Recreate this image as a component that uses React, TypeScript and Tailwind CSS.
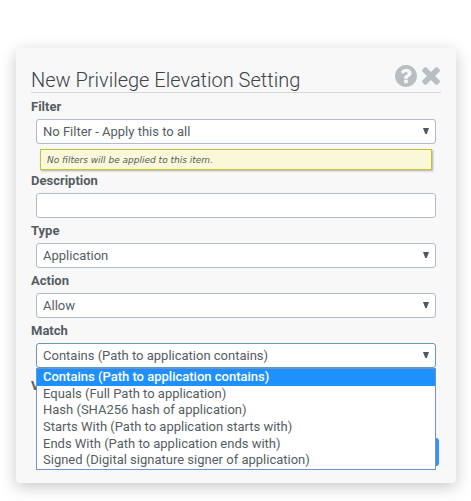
import React, { useState } from 'react';

interface SelectFieldProps {
  id: string;
  label: string;
  options: string[];
  open?: boolean;
  children?: React.ReactNode;
}

const matchOptions = [
  'Contains (Path to application contains)',
  'Equals (Full Path to application)',
  'Hash (SHA256 hash of application)',
  'Starts With (Path to application starts with)',
  'Ends With (Path to application ends with)',
  'Signed (Digital signature signer of application)',
];

const FieldLabel: React.FC<{ id: string; children: React.ReactNode }> = ({ id, children }) => (
  <label htmlFor={id} className="mb-[2px] block pt-px text-[13px] leading-5 font-bold text-[#555d63]">
    {children}
  </label>
);

const SelectField: React.FC<SelectFieldProps> = ({ id, label, options, open = false, children }) => {
  const [value, setValue] = useState(options[0]);

  return (
    <div>
      <FieldLabel id={id}>{label}</FieldLabel>
      <div className="relative mx-[5px]">
        <select
          id={id}
          value={value}
          onChange={(e) => setValue(e.target.value)}
          className={`block h-[25px] w-full appearance-none rounded-[3px] border bg-white px-[6px] text-[13px] leading-5 outline-none ${
            open ? 'border-[#6797bd]' : 'border-[#aebccd]'
          }`}
        >
          {options.map((option) => (
            <option key={option}>{option}</option>
          ))}
        </select>
        {/* Drop-down arrow */}
        <svg
          viewBox="0 0 6 6"
          className="pointer-events-none absolute top-[9px] right-[7px] size-[6px] fill-[#4b5962]"
          aria-hidden="true"
        >
          <path d="M0 0h6L3.7 6H2.3z" />
        </svg>

        {open && (
          <ul
            role="listbox"
            aria-label={label}
            className="absolute inset-x-0 top-full z-10 grid h-[102px] grid-rows-6 border border-[#6f93cf] bg-white text-[13px] leading-4"
          >
            {options.map((option) => (
              <li
                key={option}
                role="option"
                aria-selected={option === value}
                onClick={() => setValue(option)}
                className={`px-[6px] whitespace-nowrap ${option === value ? 'bg-[#1e90ff] font-medium text-white' : ''}`}
              >
                {option}
              </li>
            ))}
          </ul>
        )}
      </div>
      {children}
    </div>
  );
};

const TextField: React.FC<{ id: string; label: string }> = ({ id, label }) => (
  <div>
    <FieldLabel id={id}>{label}</FieldLabel>
    <div className="mx-[5px]">
      <input
        id={id}
        type="text"
        className="block h-[25px] w-full rounded-[3px] border border-[#aebccd] bg-white px-[6px] text-[13px] outline-none"
      />
    </div>
  </div>
);

const App: React.FC = () => {
  return (
    <div className="min-h-screen bg-white pt-12 pr-[15px] pb-[18px] pl-4 font-[Roboto,sans-serif] text-[#555d63]">
      <form className="rounded-[4px] bg-[#f8f8f8] px-[15px] pt-4 pb-[17px] shadow-[0_4px_16px_rgba(0,0,0,0.22)]">
        <header className="flex items-start justify-between border-b border-[#d5d9dc]">
          <h1 className="pt-1 text-[20px] leading-6 font-light text-[#39434a]">New Privilege Elevation Setting</h1>
          <div className="flex items-center gap-[5px] pt-px pr-px text-[#b8bfc3]">
            <button type="button" aria-label="Help">
              <svg viewBox="128 128 1536 1536" className="size-[22px] fill-current">
                <path d="M1024 1376v-192q0-14-9-23t-23-9h-192q-14 0-23 9t-9 23v192q0 14 9 23t23 9h192q14 0 23-9t9-23zm256-672q0-88-55.5-163t-138.5-116-170-41q-243 0-371 213-15 24 8 42l132 100q7 6 19 6 16 0 25-12 53-68 86-92 34-24 86-24 48 0 85.5 26t37.5 59q0 38-20 61t-68 45q-63 28-115.5 86.5t-52.5 125.5v36q0 14 9 23t23 9h192q14 0 23-9t9-23q0-19 21.5-49.5t54.5-49.5q32-18 49-28.5t46-35 44.5-48 28-60.5 12.5-81zm384 192q0 209-103 385.5t-279.5 279.5-385.5 103-385.5-103-279.5-279.5-103-385.5 103-385.5 279.5-279.5 385.5-103 385.5 103 279.5 279.5 103 385.5z" />
              </svg>
            </button>
            <button type="button" aria-label="Close">
              <svg viewBox="110 366 1188 1188" className="size-[18px] fill-current">
                <path d="M1298 1322q0 40-28 68l-136 136q-28 28-68 28t-68-28l-294-294-294 294q-28 28-68 28t-68-28l-136-136q-28-28-28-68t28-68l294-294-294-294q-28-28-28-68t28-68l136-136q28-28 68-28t68 28l294 294 294-294q28-28 68-28t68 28l136 136q28 28 28 68t-28 68l-294 294 294 294q28 28 28 68z" />
              </svg>
            </button>
          </div>
        </header>

        <div className="flex flex-col gap-[2px] pt-[3px]">
          <SelectField id="filter" label="Filter" options={['No Filter - Apply this to all']}>
            <p className="mx-[9px] mt-[5px] -mb-[2px] border border-[#c2c234] bg-[#faf8d8] px-[6px] pt-px font-['DejaVu_Sans',sans-serif] text-[9px] leading-[18px] italic shadow-[1px_1px_2px_rgba(0,0,0,0.3)]">
              No filters will be applied to this item.
            </p>
          </SelectField>
          <TextField id="description" label="Description" />
          <SelectField id="type" label="Type" options={['Application']} />
          <SelectField id="action" label="Action" options={['Allow', 'Deny']} />
          <SelectField id="match" label="Match" options={matchOptions} open />
        </div>
        <div className="pt-[7px]">
          <TextField id="value" label="Value" />
        </div>

        <div className="mt-[15px] flex justify-end pr-[2px]">
          <button type="submit" className="h-7 rounded-[3px] bg-[#3592ff] px-4 text-[13px] text-white">
            Save
          </button>
        </div>
      </form>
    </div>
  );
};

export default App;
